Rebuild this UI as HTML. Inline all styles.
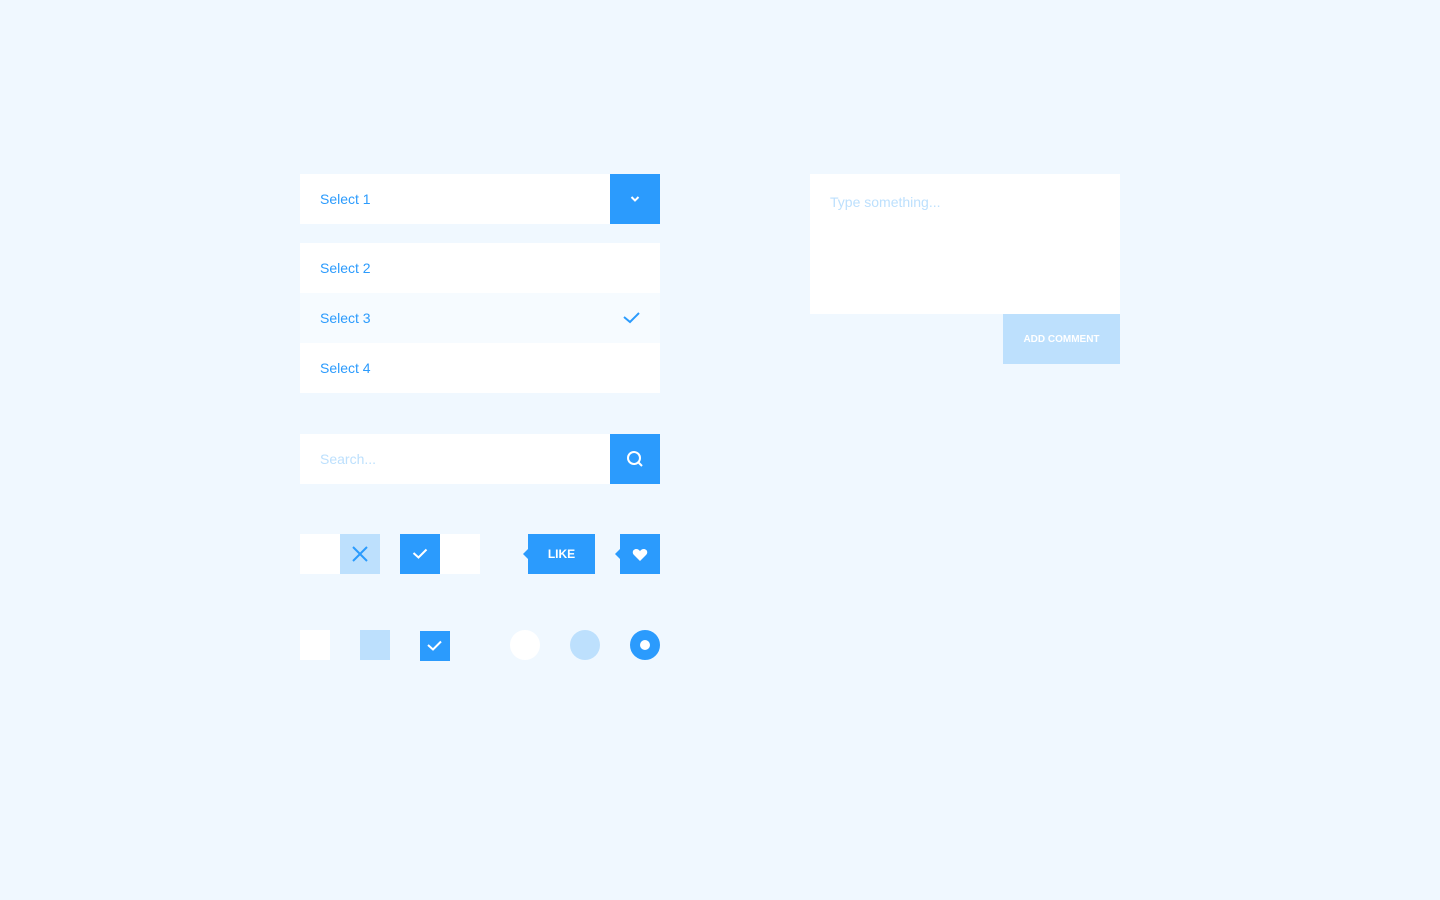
<!DOCTYPE html>
<html><head><style>
body{margin:0;width:1440px;height:900px;background:#f0f8ff;font-family:"Liberation Sans",sans-serif;position:relative;overflow:hidden}
.a{position:absolute}
.w{background:#fff}
.b{background:#2b9bfd}
.l{background:#bde0fd}
.t{font-size:14px;color:#2b9bfd}
</style></head><body>
<div class="a w" style="left:300px;top:174px;width:310px;height:50px"></div>
<div class="a t" style="left:320px;top:191px">Select 1</div>
<div class="a b" style="left:610px;top:174px;width:50px;height:50px"><svg width="50" height="50"><path d="M21.5 23l3.5 3.5 3.5-3.5" stroke="#fff" stroke-width="2" fill="none"/></svg></div>
<div class="a w" style="left:300px;top:243px;width:360px;height:150px"></div>
<div class="a" style="left:300px;top:293px;width:360px;height:50px;background:#f6fbff"></div>
<div class="a t" style="left:320px;top:260px">Select 2</div>
<div class="a t" style="left:320px;top:310px">Select 3</div>
<div class="a t" style="left:320px;top:360px">Select 4</div>
<svg class="a" style="left:620px;top:305px" width="24" height="24"><path d="M4 12l6 5 9-9" stroke="#2b9bfd" stroke-width="2" fill="none"/></svg>
<div class="a w" style="left:300px;top:434px;width:310px;height:50px"></div>
<div class="a" style="left:320px;top:451px;font-size:14px;color:#bde0fd">Search...</div>
<div class="a b" style="left:610px;top:434px;width:50px;height:50px"><svg width="50" height="50"><circle cx="24" cy="24" r="6" stroke="#fff" stroke-width="2" fill="none"/><path d="M28.5 28.5l3.5 3.5" stroke="#fff" stroke-width="2"/></svg></div>
<div class="a w" style="left:300px;top:534px;width:40px;height:40px"></div>
<div class="a l" style="left:340px;top:534px;width:40px;height:40px"><svg width="40" height="40"><path d="M13 13l14 14M27 13l-14 14" stroke="#2b9bfd" stroke-width="2"/></svg></div>
<div class="a b" style="left:400px;top:534px;width:40px;height:40px"><svg width="40" height="40"><path d="M13.5 19l5 4.5 8-8" stroke="#fff" stroke-width="2" fill="none"/></svg></div>
<div class="a w" style="left:440px;top:534px;width:40px;height:40px"></div>
<div class="a b" style="left:528px;top:534px;width:67px;height:40px;color:#fff;font-size:12px;font-weight:bold;text-align:center;line-height:40px">LIKE</div>
<div class="a" style="left:523px;top:549px;border:5px solid transparent;border-right-color:#2b9bfd;border-left:0"></div>
<div class="a b" style="left:620px;top:534px;width:40px;height:40px"><svg width="40" height="40"><path d="M20 27l-6-6c-2-2-1.5-5 1-5.8 2-.6 4 .3 5 2 1-1.7 3-2.6 5-2 2.5.8 3 3.8 1 5.8z" fill="#fff"/></svg></div>
<div class="a" style="left:615px;top:549px;border:5px solid transparent;border-right-color:#2b9bfd;border-left:0"></div>
<div class="a w" style="left:300px;top:630px;width:30px;height:30px"></div>
<div class="a l" style="left:360px;top:630px;width:30px;height:30px"></div>
<div class="a b" style="left:420px;top:631px;width:30px;height:30px"><svg width="30" height="30"><path d="M8 14l5 4.5 8-8" stroke="#fff" stroke-width="2" fill="none"/></svg></div>
<div class="a w" style="left:510px;top:630px;width:30px;height:30px;border-radius:50%"></div>
<div class="a l" style="left:570px;top:630px;width:30px;height:30px;border-radius:50%"></div>
<div class="a" style="left:630px;top:630px;width:30px;height:30px;border-radius:50%;background:#fff;box-sizing:border-box;border:10px solid #2b9bfd"></div>
<div class="a w" style="left:810px;top:174px;width:310px;height:140px"></div>
<div class="a" style="left:830px;top:194px;font-size:14px;color:#bde0fd">Type something...</div>
<div class="a l" style="left:1003px;top:314px;width:117px;height:50px;color:#fff;font-size:10px;font-weight:bold;text-align:center;line-height:52px">ADD COMMENT</div>
</body></html>
